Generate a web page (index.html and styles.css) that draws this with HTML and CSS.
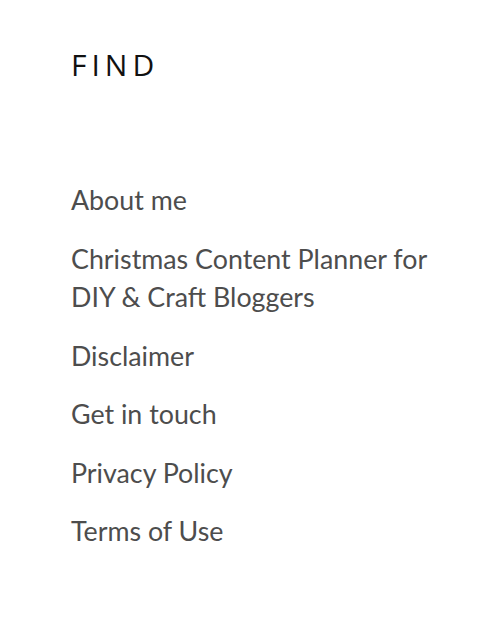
FILE: index.html
```html
<!DOCTYPE html>
<html>
<head>
<meta charset="utf-8">
<link rel="stylesheet" href="styles.css">
</head>
<body>
<aside class="widget">
  <h2 class="widget-title">FIND</h2>
  <ul class="menu">
    <li><a href="#">About me</a></li>
    <li><a href="#">Christmas Content Planner for DIY &amp; Craft Bloggers</a></li>
    <li><a href="#">Disclaimer</a></li>
    <li><a href="#">Get in touch</a></li>
    <li><a href="#">Privacy Policy</a></li>
    <li><a href="#">Terms of Use</a></li>
  </ul>
</aside>
</body>
</html>
```
FILE: styles.css
```css
html, body {
  margin: 0;
  padding: 0;
  background: #ffffff;
}
.widget {
  padding: 48px 30px 0 71px;
}
.widget-title {
  margin: 0;
  font-family: "Open Sans", "DejaVu Sans", sans-serif;
  font-weight: 400;
  font-size: 30px;
  line-height: 34px;
  letter-spacing: 5px;
  color: #111111;
}
.menu {
  list-style: none;
  margin: 0;
  padding: 0;
  padding-top: 99px;
  display: flex;
  flex-direction: column;
  gap: 20px;
}
.menu li {
  font-family: "Lato", sans-serif;
  font-size: 26.8px;
  line-height: 38.5px;
}
.menu a {
  color: #4d4d4d;
  text-decoration: none;
}
```
